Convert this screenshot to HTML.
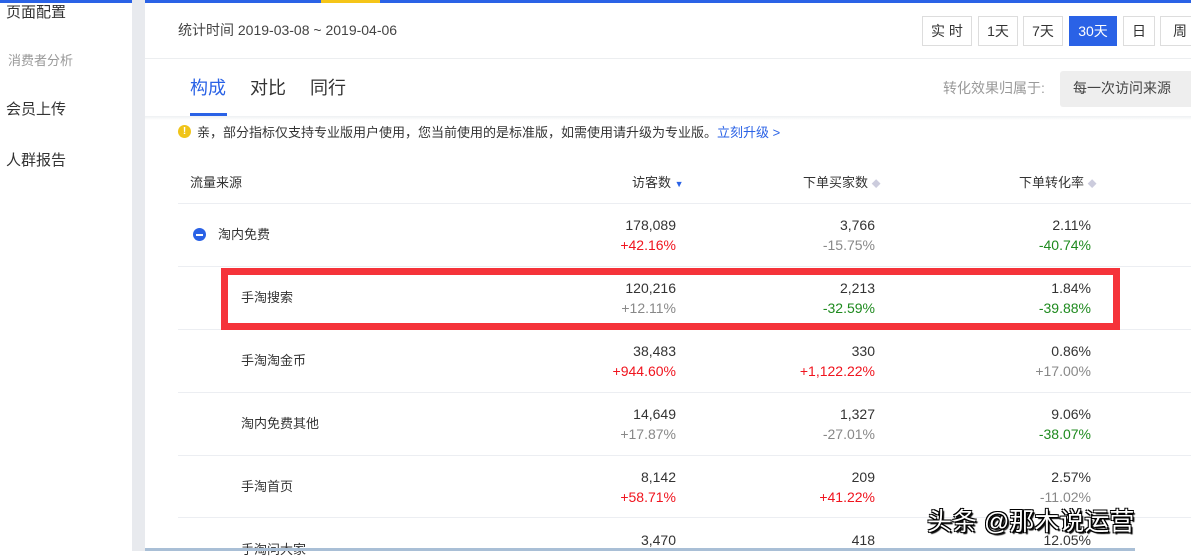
<!DOCTYPE html><html><head><meta charset="utf-8"><style>
*{margin:0;padding:0;box-sizing:border-box}
body{width:1191px;height:551px;overflow:hidden;background:#fff;font-family:"Liberation Sans","Noto Sans CJK SC",sans-serif;color:#333;position:relative}
.a{position:absolute;white-space:nowrap}
.btn{position:absolute;top:16px;height:30px;border:1px solid #ddd;font-size:14px;line-height:28px;text-align:center;color:#333;background:#fff}
.num{position:absolute;text-align:right;font-size:14px;line-height:20px}
.r{color:#f0141e}.g{color:#1e8a1e}.gy{color:#888}
.line{position:absolute;left:178px;right:0;height:1px;background:#eceef2}
</style></head><body>
<div class="a" style="left:0;top:0;width:1191px;height:3px;background:#2a62e6"></div>
<div class="a" style="left:321px;top:0;width:59px;height:3px;background:#f5c518"></div>
<div class="a" style="left:132px;top:0;width:13px;height:551px;background:#e8eaee"></div>
<div class="a" style="left:6px;top:1px;font-size:15px">页面配置</div>
<div class="a" style="left:8px;top:50px;font-size:13px;color:#999">消费者分析</div>
<div class="a" style="left:6px;top:98px;font-size:15px">会员上传</div>
<div class="a" style="left:6px;top:149px;font-size:15px">人群报告</div>
<div class="a" style="left:178px;top:20px;font-size:14px;color:#444">统计时间 2019-03-08 ~ 2019-04-06</div>
<div class="btn" style="left:922px;width:50px">实 时</div>
<div class="btn" style="left:978px;width:40px">1天</div>
<div class="btn" style="left:1023px;width:40px">7天</div>
<div class="btn" style="left:1069px;width:48px;background:#2a62e6;border-color:#2a62e6;color:#fff">30天</div>
<div class="btn" style="left:1123px;width:32px">日</div>
<div class="btn" style="left:1160px;width:40px">周</div>
<div class="a" style="left:145px;top:58px;width:1046px;height:1px;background:#eceef0"></div>
<div class="a" style="left:145px;top:116px;width:1046px;height:4px;background:linear-gradient(#eef0f3,#fff)"></div>
<div class="a" style="left:190px;top:74px;font-size:18px;color:#2a62e6">构成</div>
<div class="a" style="left:190px;top:113px;width:37px;height:3px;background:#2a62e6"></div>
<div class="a" style="left:250px;top:74px;font-size:18px">对比</div>
<div class="a" style="left:310px;top:74px;font-size:18px">同行</div>
<div class="a" style="left:943px;top:78px;font-size:14px;color:#999">转化效果归属于:</div>
<div class="a" style="left:1060px;top:71px;width:140px;height:36px;background:#eeeeee;border-radius:3px;font-size:14px;line-height:34px;padding-left:13px;color:#444">每一次访问来源</div>
<div class="a" style="left:178px;top:125px;width:13px;height:13px;border-radius:50%;background:#f0c419;color:#fff;font-size:10px;line-height:13px;text-align:center;font-weight:bold">!</div>
<div class="a" style="left:197px;top:122px;font-size:13px;color:#333">亲，部分指标仅支持专业版用户使用，您当前使用的是标准版，如需使用请升级为专业版。<span style="color:#2a62e6">立刻升级 &gt;</span></div>
<div class="a" style="left:190px;top:172px;font-size:13px">流量来源</div>
<div class="a" style="left:632px;top:172px;font-size:13px">访客数 <span style="color:#2a62e6;font-size:9px">▼</span></div>
<div class="a" style="left:803px;top:172px;font-size:13px">下单买家数 <span style="color:#ccd;font-size:9px">◆</span></div>
<div class="a" style="left:1019px;top:172px;font-size:13px">下单转化率 <span style="color:#ccd;font-size:9px">◆</span></div>
<div class="line" style="top:203px"></div><div class="line" style="top:266px"></div><div class="line" style="top:329px"></div><div class="line" style="top:392px"></div><div class="line" style="top:455px"></div><div class="line" style="top:517px"></div>
<div class="a" style="left:193px;top:228px;width:13px;height:13px;border-radius:50%;background:#2a62e6"><div style="position:absolute;left:3px;top:6px;width:7px;height:1.5px;background:#fff"></div></div>
<div class="a" style="left:218px;top:224px;font-size:13px">淘内免费</div>
<div class="a" style="left:241px;top:287px;font-size:13px">手淘搜索</div>
<div class="a" style="left:241px;top:350px;font-size:13px">手淘淘金币</div>
<div class="a" style="left:241px;top:413px;font-size:13px">淘内免费其他</div>
<div class="a" style="left:241px;top:476px;font-size:13px">手淘首页</div>
<div class="a" style="left:241px;top:539px;font-size:13px">手淘问大家</div>
<div class="num" style="right:515px;top:215px">178,089<br><span class="r">+42.16%</span></div>
<div class="num" style="right:515px;top:278px">120,216<br><span class="gy">+12.11%</span></div>
<div class="num" style="right:515px;top:341px">38,483<br><span class="r">+944.60%</span></div>
<div class="num" style="right:515px;top:404px">14,649<br><span class="gy">+17.87%</span></div>
<div class="num" style="right:515px;top:467px">8,142<br><span class="r">+58.71%</span></div>
<div class="num" style="right:515px;top:530px">3,470</div>
<div class="num" style="right:316px;top:215px">3,766<br><span class="gy">-15.75%</span></div>
<div class="num" style="right:316px;top:278px">2,213<br><span class="g">-32.59%</span></div>
<div class="num" style="right:316px;top:341px">330<br><span class="r">+1,122.22%</span></div>
<div class="num" style="right:316px;top:404px">1,327<br><span class="gy">-27.01%</span></div>
<div class="num" style="right:316px;top:467px">209<br><span class="r">+41.22%</span></div>
<div class="num" style="right:316px;top:530px">418</div>
<div class="num" style="right:100px;top:215px">2.11%<br><span class="g">-40.74%</span></div>
<div class="num" style="right:100px;top:278px">1.84%<br><span class="g">-39.88%</span></div>
<div class="num" style="right:100px;top:341px">0.86%<br><span class="gy">+17.00%</span></div>
<div class="num" style="right:100px;top:404px">9.06%<br><span class="g">-38.07%</span></div>
<div class="num" style="right:100px;top:467px">2.57%<br><span class="gy">-11.02%</span></div>
<div class="num" style="right:100px;top:530px">12.05%</div>
<div class="a" style="left:221px;top:268px;width:899px;height:62px;border:7px solid #f5333a"></div>
<div class="a" style="left:145px;top:548px;width:990px;height:3px;background:#a9bfd6"></div>
<div class="a" style="left:927px;top:502px;font-size:25px;color:#fff;text-shadow:1px 1px 0 #000,-1px -1px 0 #000,1px -1px 0 #000,-1px 1px 0 #000,2px 2px 1px #000">头条 @那木说运营</div>
</body></html>
